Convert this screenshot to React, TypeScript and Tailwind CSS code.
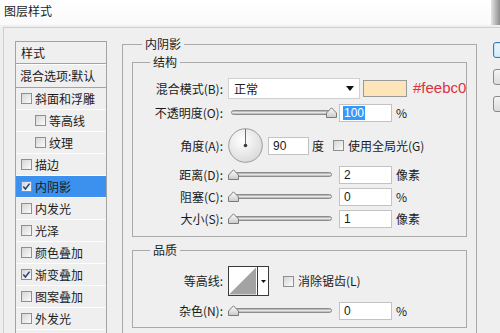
import type { ReactNode } from 'react'

const cjk = "font-['Noto_Sans_CJK_SC',sans-serif]"
const latin = "font-['Liberation_Sans',sans-serif]"

function CheckBox({ checked = false }: { checked?: boolean }) {
  return (
    <span className="flex h-[11px] w-[11px] shrink-0 items-center justify-center border border-[#8e8f8f] bg-linear-to-br from-[#d6d6d6] to-[#fbfbfb]">
      {checked && (
        <svg width="9" height="9" viewBox="0 0 9 9">
          <path d="M1.3 4.6 L3.4 7 L7.6 1.6" fill="none" stroke="#2a3f7e" strokeWidth="1.5" />
        </svg>
      )}
    </span>
  )
}

function Thumb() {
  return (
    <svg width="11" height="11" viewBox="0 0 11 11">
      <defs>
        <linearGradient id="thumb" x1="0" y1="0" x2="0" y2="1">
          <stop offset="0" stopColor="#ffffff" />
          <stop offset="1" stopColor="#c9c9c9" />
        </linearGradient>
      </defs>
      <path d="M0.5 10.5 V6 L5.5 0.8 L10.5 6 V10.5 Z" fill="url(#thumb)" stroke="#7a7a7a" />
    </svg>
  )
}

function Slider({ full = false }: { full?: boolean }) {
  return (
    <div className="relative ml-[8px] h-[18px] w-[101px] shrink-0">
      <div className="absolute left-0 right-0 top-[6px] h-[5px] rounded-full border border-[#8c8c8c] bg-linear-to-b from-[#a4a4a4] via-[#e6e6e6] to-[#b0b0b0]" />
      <div className={`absolute top-[3px] ${full ? 'right-[-5px]' : 'left-[-3px]'}`}>
        <Thumb />
      </div>
    </div>
  )
}

function NumInput({ value, selected = false, w = 'w-[53px]', ml = 'ml-[7px]' }: { value: string; selected?: boolean; w?: string; ml?: string }) {
  return (
    <div className={`${ml} ${w} flex h-[18px] shrink-0 items-center border border-[#c3c3c3] bg-white pl-[3px] text-[12px] ${latin}`}>
      {selected ? <span className="bg-[#3399ff] px-[1px] leading-[14px] text-white">{value}</span> : <span className="px-[1px]">{value}</span>}
    </div>
  )
}

function Label({ children }: { children: ReactNode }) {
  return <div className="w-[90px] shrink-0 text-right">{children}</div>
}

function SliderRow({ label, value, unit, full = false, selected = false }: { label: string; value: string; unit: string; full?: boolean; selected?: boolean }) {
  return (
    <div className="flex h-[18px] items-center">
      <Label>{label}</Label>
      <Slider full={full} />
      <NumInput value={value} selected={selected} />
      <span className="ml-[4px]">{unit}</span>
    </div>
  )
}

function Group({ title, className, children }: { title: string; className: string; children: ReactNode }) {
  return (
    <fieldset className={`m-0 border border-[#a9a9a9] p-0 ${className}`}>
      <legend className="ml-[17px] h-[16px] px-[3px] leading-[16px]">{title}</legend>
      {children}
    </fieldset>
  )
}

const items = [
  { label: '斜面和浮雕' },
  { label: '等高线', indent: true },
  { label: '纹理', indent: true },
  { label: '描边' },
  { label: '内阴影', checked: true, selected: true },
  { label: '内发光' },
  { label: '光泽' },
  { label: '颜色叠加' },
  { label: '渐变叠加', checked: true },
  { label: '图案叠加' },
  { label: '外发光' },
]

export default function App() {
  return (
    <div className={`h-[333px] w-[500px] overflow-hidden bg-[#efefef] text-[12px] text-[#1b1b1b] ${cjk}`}>
      <div className="flex h-[25px] items-center justify-between bg-linear-to-b from-white to-[#fafafa]">
        <span className="pb-[3px] pl-[4px] text-[12px]">图层样式</span>
        <div className="h-full w-[9px] bg-linear-to-r from-[#e6e6e6] to-[#8d8d8d]" />
      </div>

      <div className="ml-[3px] mt-[2px] flex h-[306px] border-l border-t border-[#cfcfcf]">
        {/* style list */}
        <div className="ml-[11px] mt-[13px] h-[320px] w-[92px] shrink-0 border border-[#a3a3a3]">
          <div className="flex h-[22px] items-center border-b border-[#a3a3a3] pl-[5px]">样式</div>
          <div className="flex h-[24px] items-center border-b border-t border-b-[#a3a3a3] border-t-white pl-[4px]">混合选项:默认</div>
          {items.map((it) => (
            <div
              key={it.label}
              className={`flex h-[22px] items-center border-b border-[#fdfdfd] ${it.indent ? 'pl-[19px]' : 'pl-[5px]'} ${it.selected ? 'bg-[#3c91ef]' : ''}`}
            >
              <CheckBox checked={it.checked} />
              <span className="ml-[3px]">{it.label}</span>
            </div>
          ))}
        </div>

        {/* inner shadow panel */}
        <Group title="内阴影" className="ml-[15px] mt-[8px] h-[312px] w-[355px] shrink-0 [&>legend]:ml-[19px]">
          <Group title="结构" className="ml-[9px] mt-[2px] w-[335px] pb-[8px]">
            <div className="mt-[8px] flex h-[21px] items-center">
              <Label>混合模式(B):</Label>
              <div className="ml-[5px] flex h-[21px] w-[132px] shrink-0 items-center justify-between border border-[#d0d0d0] bg-white pl-[5px] pr-[5px]">
                <span>正常</span>
                <svg width="8" height="5" viewBox="0 0 8 5">
                  <path d="M0 0 H8 L4 5 Z" fill="#111" />
                </svg>
              </div>
              <div className="ml-[3px] h-[17px] w-[44px] shrink-0 border border-[#9a9a9a] bg-[#fde5b9]" />
              <span className={`ml-[6px] text-[15px] text-[#e0303c] ${latin}`}>#feebc0</span>
            </div>
            <div className="mt-[5px]">
              <SliderRow label="不透明度(O):" value="100" unit="%" full selected />
            </div>
            <div className="mt-[6px] flex h-[35px] items-center">
              <Label>角度(A):</Label>
              <svg className="ml-[5px] shrink-0" width="35" height="35" viewBox="0 0 35 35">
                <defs>
                  <radialGradient id="dial" cx="0.4" cy="0.35" r="0.7">
                    <stop offset="0" stopColor="#ffffff" />
                    <stop offset="1" stopColor="#d9d9d9" />
                  </radialGradient>
                </defs>
                <circle cx="17.5" cy="17.5" r="16.8" fill="url(#dial)" stroke="#9b9b9b" />
                <line x1="17.5" y1="1" x2="17.5" y2="17" stroke="#6e6e6e" strokeWidth="1" />
                <circle cx="17.5" cy="17.5" r="1.8" fill="#3a3a3a" />
              </svg>
              <NumInput value="90" w="w-[41px]" ml="ml-[5px]" />
              <span className="ml-[3px]">度</span>
              <span className="ml-[9px]">
                <CheckBox />
              </span>
              <span className="ml-[4px]">使用全局光(G)</span>
            </div>
            <div className="mt-[3px]">
              <SliderRow label="距离(D):" value="2" unit="像素" />
            </div>
            <div className="mt-[4px]">
              <SliderRow label="阻塞(C):" value="0" unit="%" />
            </div>
            <div className="mt-[4px]">
              <SliderRow label="大小(S):" value="1" unit="像素" />
            </div>
          </Group>

          <Group title="品质" className="ml-[9px] mt-[5px] w-[335px] pb-[7px]">
            <div className="mt-[8px] flex h-[30px] items-center">
              <Label>等高线:</Label>
              <div className="ml-[5px] flex h-[30px] w-[41px] shrink-0 border border-[#3a3a3a] bg-white">
                <svg width="29" height="28" viewBox="0 0 29 28" className="border-r border-[#3a3a3a]">
                  <polygon points="0,28 28,0 28,28" fill="#a3a3a3" />
                </svg>
                <div className="flex flex-1 items-center justify-center">
                  <svg width="5" height="3" viewBox="0 0 5 3">
                    <path d="M0 0 H5 L2.5 3 Z" fill="#111" />
                  </svg>
                </div>
              </div>
              <span className="ml-[14px]">
                <CheckBox />
              </span>
              <span className="ml-[4px]">消除锯齿(L)</span>
            </div>
            <div className="mt-[6px]">
              <SliderRow label="杂色(N):" value="0" unit="%" />
            </div>
          </Group>
        </Group>

        {/* buttons */}
        <div className="ml-[16px] mt-[14px] flex shrink-0 flex-col gap-[11px]">
          <div className="h-[16px] w-[80px] rounded-[3px] border border-[#3d7bad] bg-linear-to-b from-[#eaf6fd] to-[#d4ecf9] shadow-[inset_0_0_0_1px_#bfe4f7]" />
          <div className="h-[16px] w-[80px] rounded-[3px] border border-[#8a8a8a] bg-linear-to-b from-[#f4f4f4] to-[#dcdcdc]" />
          <div className="h-[16px] w-[80px] rounded-[3px] border border-[#8a8a8a] bg-linear-to-b from-[#f4f4f4] to-[#dcdcdc]" />
        </div>
      </div>
    </div>
  )
}
